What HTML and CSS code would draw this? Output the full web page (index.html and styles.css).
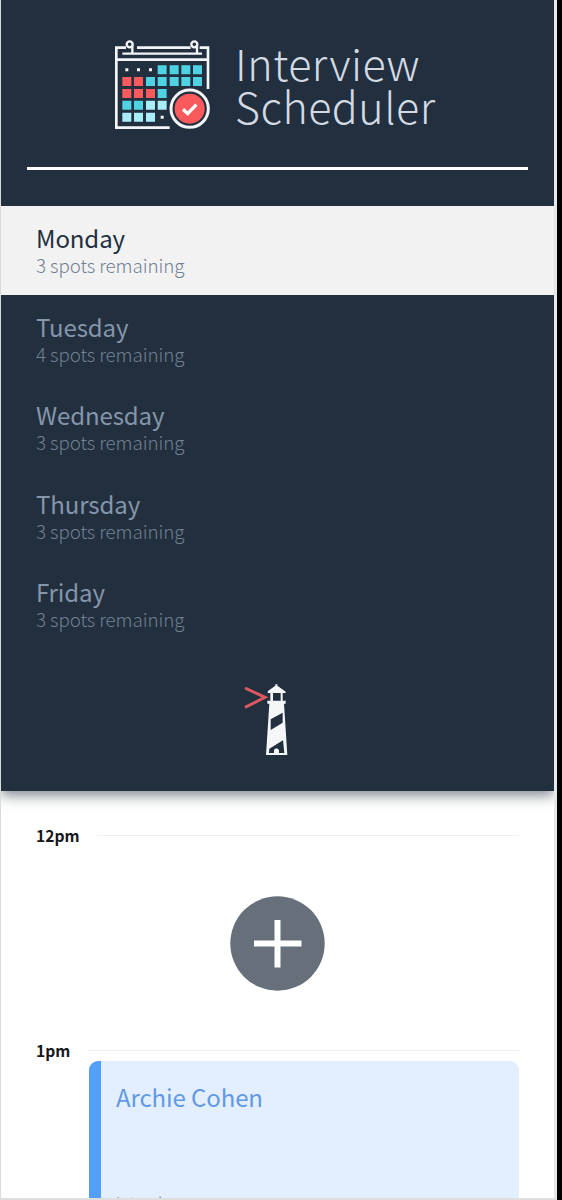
FILE: index.html
```html
<!DOCTYPE html>
<html lang="en">
<head>
<meta charset="utf-8">
<title>Interview Scheduler</title>
<link rel="stylesheet" href="styles.css">
</head>
<body>
<main class="layout">
  <section class="sidebar">
    <header class="brand">
      <svg class="brand-icon" viewBox="42 42 294 276" aria-hidden="true">
        <g fill="none" stroke="#f3f5f9" stroke-width="8">
          <path d="M78 68H49V308H209M111 68H272M299 68H324V192M49 104H324"/>
          <path d="M67 86H306" stroke-width="7"/>
          <path d="M97 86V60M291 86V60" stroke-width="7"/>
          <circle cx="89" cy="58" r="9" stroke-width="7"/>
          <circle cx="283" cy="58" r="9" stroke-width="7"/>
        </g>
        <path fill="#f3f5f9" d="M76 130h9v9h-9zM111 130h9v9h-9zM147 130h9v9h-9zM182 272h9v9h-9z"/>
        <path fill="#4fd3e3" d="M173 121h27v27h-27zM209 121h27v27h-27zM244 121h27v27h-27zM279 121h27v27h-27zM138 156h27v27h-27zM173 156h27v27h-27zM209 156h27v27h-27zM244 156h27v27h-27zM279 156h27v27h-27zM173 192h27v27h-27zM67 227h27v27h-27zM102 227h27v27h-27z"/>
        <path fill="#fb5a5c" d="M67 156h27v27h-27zM102 156h27v27h-27zM67 192h27v27h-27zM102 192h27v27h-27zM138 192h27v27h-27z"/>
        <path fill="#a9edf9" d="M138 227h27v27h-27zM173 227h27v27h-27zM67 263h27v27h-27zM102 263h27v27h-27zM138 263h27v27h-27z"/>
        <circle cx="269" cy="251" r="64" fill="#222f3e"/>
        <circle cx="269" cy="251" r="56" fill="#222f3e" stroke="#f3f5f9" stroke-width="9"/>
        <circle cx="269" cy="251" r="45" fill="#fb5a5c"/>
        <path d="M249 253L263 266L289 239" fill="none" stroke="#fff" stroke-width="10"/>
      </svg>
      <h1 class="brand-name"><span class="brand-line">Interview</span><span class="brand-line">Scheduler</span></h1>
    </header>
    <hr class="separator">
    <nav class="days">
      <div class="day day-selected"><h2 class="day-name">Monday</h2><p class="day-spots">3 spots remaining</p></div>
      <div class="day"><h2 class="day-name">Tuesday</h2><p class="day-spots">4 spots remaining</p></div>
      <div class="day"><h2 class="day-name">Wednesday</h2><p class="day-spots">3 spots remaining</p></div>
      <div class="day"><h2 class="day-name">Thursday</h2><p class="day-spots">3 spots remaining</p></div>
      <div class="day"><h2 class="day-name">Friday</h2><p class="day-spots">3 spots remaining</p></div>
    </nav>
    <svg class="lighthouse" viewBox="42 42 132 216" aria-hidden="true">
      <path d="M45 54L105 82L45 112" fill="none" stroke="#dd5960" stroke-width="9"/>
      <path fill="#f5f6f8" d="M113 65L117 61L136 47V43H142V47L161 61L167 65V69H158V92H167V101H162L172 255H108L118 101H112V92H121V69H113Z"/>
      <path fill="#222f3e" d="M129 69H152V92H129ZM122 148L158 128V158L122 180ZM118 236L159 211L163 249H147V240Q139 230 132 240V249H117Z"/>
    </svg>
  </section>
  <section class="schedule">
    <div class="slot slot-empty">
      <header class="slot-head"><h4 class="slot-time">12pm</h4><hr class="slot-rule"></header>
      <svg class="add" viewBox="0 0 95 95" aria-label="Add">
        <circle cx="47.5" cy="47.5" r="47.2" fill="#666f7a"/>
        <path d="M47.5 24V71.5M24 47.5H71.5" stroke="#fff" stroke-width="6"/>
      </svg>
    </div>
    <div class="slot">
      <header class="slot-head"><h4 class="slot-time">1pm</h4><hr class="slot-rule"></header>
      <article class="card">
        <h2 class="card-name">Archie Cohen</h2>
        <p class="card-label">Interviewer</p>
      </article>
    </div>
  </section>
</main>
</body>
</html>
```

FILE: styles.css
```css
* { box-sizing: border-box; margin: 0; padding: 0; }

body {
  height: 1200px;
  overflow: hidden;
  background: #000;
  font-family: "Noto Sans CJK SC", "Noto Sans", sans-serif;
}

.layout {
  width: 557px;
  height: 1200px;
  overflow: hidden;
  display: flex;
  flex-direction: column;
  background: #fff;
  border-left: 1px solid #d9dbdd;
  border-right: 3px solid #e6e7e8;
  border-bottom: 2px solid #dedede;
}

.sidebar {
  flex: none;
  height: 791px;
  display: flex;
  flex-direction: column;
  background: #222f3e;
  box-shadow: 0 4px 13px rgba(34, 47, 62, 0.6);
}

.brand {
  height: 167px;
  padding: 39px 0 0 113px;
  display: flex;
  gap: 23px;
}

.brand-icon { width: 98px; height: 92px; }

.brand-name {
  padding-top: 2px;
  font-size: 43px;
  font-weight: 200;
  line-height: 42.5px;
  letter-spacing: 0.5px;
  color: #d3dae4;
}

.brand-line { display: block; }

.separator {
  flex: none;
  height: 3px;
  margin: 0 26px 36px;
  border: 0;
  background: #fff;
}

.days { color: #8596aa; }

.day {
  height: 88.5px;
  padding: 17px 35px 0;
}

.day-selected { background: #f2f2f2; color: #222f3e; }

.day-name {
  font-size: 24px;
  font-weight: 400;
  line-height: 30px;
  letter-spacing: -0.1px;
}

.day-spots {
  font-size: 18.8px;
  font-weight: 300;
  line-height: 24px;
  letter-spacing: -0.1px;
  color: #718093;
}

.lighthouse {
  width: 44px;
  height: 72px;
  margin: 35.5px 0 0 243px;
}

.schedule { padding: 29px 35px 0; }

.slot-empty { height: 215px; }

.slot-head {
  height: 30px;
  display: flex;
  align-items: center;
  gap: 18px;
}

.slot-time {
  font-size: 15.6px;
  font-weight: 700;
  line-height: 30px;
  color: #15171b;
}

.slot-rule {
  flex: 1;
  height: 1px;
  border: 0;
  background: #eeeeee;
}

.add {
  display: block;
  width: 95px;
  height: 95px;
  margin: 46px auto 0;
}

.card {
  height: 190px;
  margin: -4px 0 0 53px;
  padding: 20px 15px 0;
  border-left: 12px solid #539ffa;
  border-radius: 9px;
  background: #e3effe;
}

.card-name {
  font-size: 24px;
  font-weight: 400;
  line-height: 32px;
  letter-spacing: -0.1px;
  color: #6299e4;
}

.card-label {
  padding-top: 74px;
  font-size: 16px;
  font-weight: 300;
  line-height: 30px;
  color: #718093;
}
```
